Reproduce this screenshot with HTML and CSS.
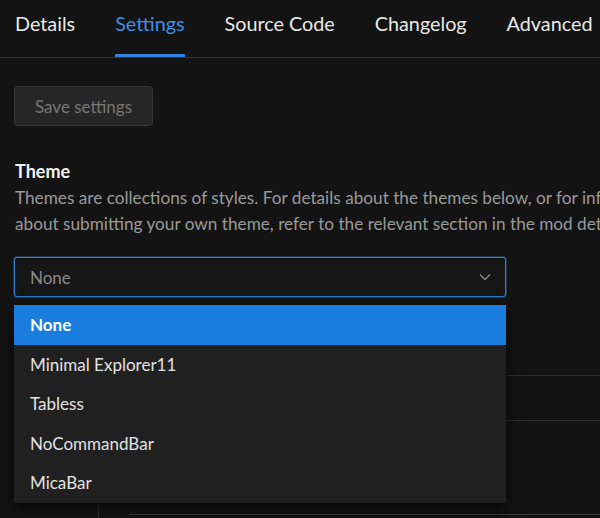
FILE: index.html
```html
<!DOCTYPE html>
<html lang="en">
<head>
  <meta charset="UTF-8" />
  <title>Mod settings</title>
  <link rel="stylesheet" href="styles.css">
</head>
<body>
  <nav class="tabs">
    <a href="#" class="tab">Details</a>
    <a href="#" class="tab active">Settings</a>
    <a href="#" class="tab">Source Code</a>
    <a href="#" class="tab">Changelog</a>
    <a href="#" class="tab">Advanced</a>
  </nav>

  <main class="content">
    <button class="save-btn" disabled>Save settings</button>

    <section class="setting">
      <h3>Theme</h3>
      <p class="description">
        <span>Themes are collections of styles. For details about the themes below, or for information</span>
        <span>about submitting your own theme, refer to the relevant section in the mod details.</span>
      </p>

      <div class="select-wrap">
        <div class="select">
          <span class="select-value">None</span>
          <svg class="chevron" width="12" height="8" viewBox="0 0 12 8">
            <path d="M1 1.5 L6 6.5 L11 1.5" fill="none" stroke="#8a8a8a" stroke-width="1.3"/>
          </svg>
        </div>

        <ul class="dropdown">
          <li class="selected">None</li>
          <li>Minimal Explorer11</li>
          <li>Tabless</li>
          <li>NoCommandBar</li>
          <li>MicaBar</li>
        </ul>
      </div>
    </section>

    <section class="behind">
      <div class="behind-row"></div>
      <div class="behind-row"></div>
      <div class="behind-nested">
        <div class="behind-side"></div>
        <div class="behind-input"></div>
      </div>
    </section>
  </main>
</body>
</html>
```

FILE: styles.css
```css
* {
  margin: 0;
  padding: 0;
  box-sizing: border-box;
}

body, html {
  height: 100%;
  overflow: hidden;
  background-color: #131313;
  font-family: 'Lato', sans-serif;
  color: #e6e6e6;
}

.tabs {
  display: flex;
  gap: 40px;
  padding: 0 15px;
  height: 58px;
  border-bottom: 1px solid #333;
  white-space: nowrap;
}

.tab {
  display: flex;
  align-items: center;
  height: 100%;
  padding-bottom: 8px;
  font-size: 19.8px;
  color: #e8e8e8;
  text-decoration: none;
  border-bottom: 3px solid transparent;
}

.tab.active {
  color: #3b8fe6;
  border-bottom-color: #2f82dc;
}

.content {
  padding: 28px 14px 0;
}

.save-btn {
  width: 139px;
  height: 40px;
  font-family: inherit;
  font-size: 17px;
  color: #777;
  background-color: #262626;
  border: 1px solid #363636;
  border-radius: 4px;
}

.setting {
  margin-top: 33px;
}

.setting h3 {
  padding-left: 1px;
  font-size: 18px;
  font-weight: 700;
  color: #f2f2f2;
  line-height: 24px;
}

.description {
  margin-top: 2px;
  padding-left: 1px;
  font-size: 17.2px;
  line-height: 26px;
  color: #9a9a9a;
  white-space: nowrap;
}

.description span {
  display: block;
}

.select-wrap {
  position: relative;
  width: 492px;
  margin-top: 20px;
}

.select {
  display: flex;
  justify-content: space-between;
  align-items: center;
  height: 40px;
  padding: 0 14px 0 15px;
  background-color: #161616;
  border: 1px solid #2f7fd0;
  border-radius: 3px;
  box-shadow: 0 0 0 1px rgba(47, 127, 208, 0.35);
}

.select-value {
  font-size: 17px;
  color: #8a8a8a;
}

.dropdown {
  position: absolute;
  top: 48px;
  left: 0;
  right: 0;
  z-index: 2;
  list-style: none;
  background-color: #202020;
  box-shadow: 0 4px 14px rgba(0, 0, 0, 0.7);
}

.dropdown li {
  height: 39.5px;
  display: flex;
  align-items: center;
  padding-left: 16px;
  font-size: 17px;
  color: #e2e2e2;
}

.dropdown li.selected {
  background-color: #1a7ddd;
  color: #fff;
  font-weight: 700;
}

.behind {
  margin: 78px -14px 0 0;
}

.behind-row {
  height: 45px;
  border-top: 1px solid #2e2e2e;
}

.behind-nested {
  display: flex;
  gap: 30px;
  margin-top: 40px;
  padding-left: 84px;
}

.behind-side {
  width: 1px;
  height: 20px;
  background-color: #2e2e2e;
}

.behind-input {
  flex: 1;
  height: 20px;
  margin-top: 9px;
  border-top: 1px solid #3a3a3a;
}
```
